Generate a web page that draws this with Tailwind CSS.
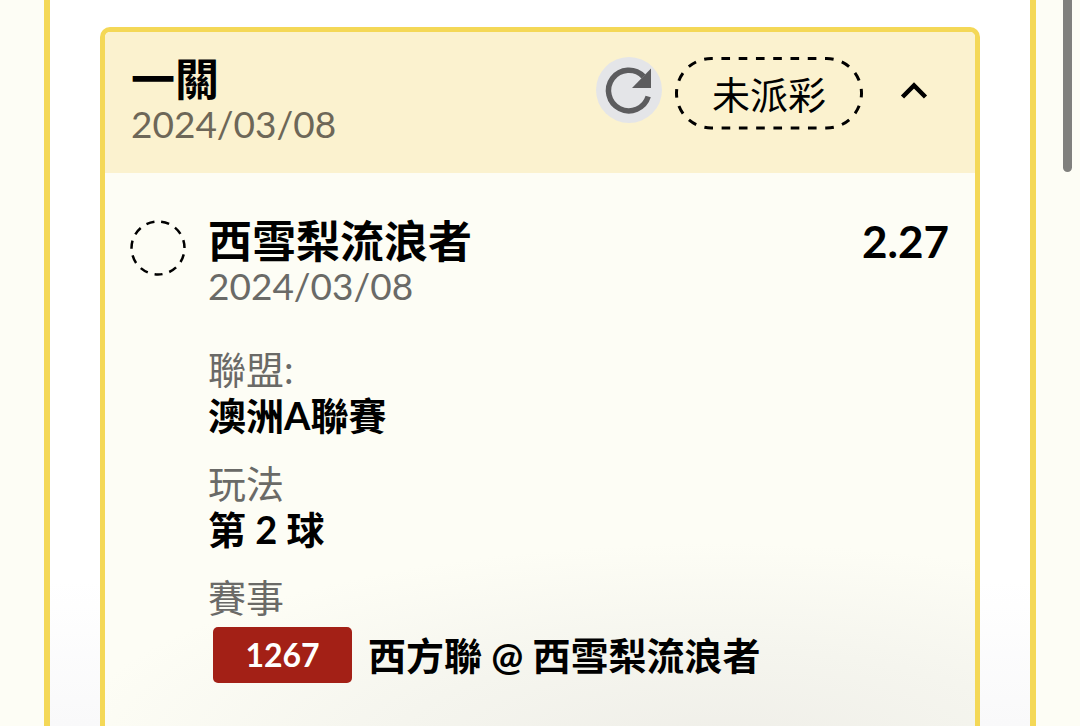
<!DOCTYPE html>
<html lang="zh-Hant">
<head>
<meta charset="utf-8">
<meta name="viewport" content="width=device-width, initial-scale=1">
<title>一關</title>
<script src="https://cdn.jsdelivr.net/npm/@tailwindcss/browser@4"></script>
</head>
<body class="relative min-h-screen overflow-hidden bg-[#fdfdf5] font-['Lato','Noto_Sans_CJK_TC',sans-serif] text-black">
<main class="mx-11 flex min-h-screen border-x-6 border-[#f4d857] bg-linear-to-b from-white from-80% to-[#f9f9fa] px-[50px] pt-[27px]">
  <article class="flex flex-1 flex-col overflow-hidden rounded-t-[10px] border-x-5 border-t-5 border-[#f4d857] bg-[#fdfdf5]">
    <header class="flex h-[141px] items-start bg-[#fbf2cf] pt-[25px] pr-[47px] pl-[26px]">
      <div class="flex-1">
        <h1 class="text-[44px] leading-[44px] font-bold">一關</h1>
        <time class="block text-[37px] leading-[46px] text-[#6d6758]">2024/03/08</time>
      </div>
      <button type="button" aria-label="重新整理" class="size-[66px] rounded-full bg-[#e4e5e8]">
        <svg viewBox="0 0 66 66" class="size-full" fill="none"><path d="M52.200 39.500A20.300 20.300 0 1 1 47.500 19.500" stroke="#5c5c5e" stroke-width="5.500"/><path d="M55 11.500v19.500H36z" fill="#5c5c5e"/></svg>
      </button>
      <div class="relative ml-3 flex h-[74px] w-[190px] items-center justify-center text-[38px]">
        <svg viewBox="0 0 190 74" class="absolute inset-0 size-full" fill="none"><rect x="2.500" y="1.500" width="185" height="69.500" rx="34.750" pathLength="442" stroke="#000" stroke-width="3" stroke-dasharray="8.500 8.500" stroke-dashoffset="7"/></svg>
        <span>未派彩</span>
      </div>
      <button type="button" aria-label="收合" class="ml-9 flex h-[68px] w-7 items-center justify-center">
        <svg viewBox="0 0 28 18" class="h-[18px] w-7" fill="none"><path d="M2.500 15 14 3.500l11.500 11.500" stroke="#000" stroke-width="4.500"/></svg>
      </button>
    </header>
    <section class="flex flex-1 items-start bg-[radial-gradient(ellipse_75%_38%_at_70%_105%,#efeee8,#f5f5ee_50%,#fdfdf5)] pt-[46px] pr-[26px] pl-6">
      <svg viewBox="0 0 58 58" class="size-[58px]" fill="none"><circle cx="29" cy="29" r="26.500" stroke="#000" stroke-width="2.500" stroke-dasharray="8.200 6.900 8.200 6.900 8.200 6.900 8.200 6.900 8.200 6.900 8.200 6.900 8.200 6.900 8.200 6.900 8.200 6.900 8.200 6.900 8.200 20" stroke-dashoffset="-6.500"/></svg>
      <div class="ml-[21px] flex-1">
        <div class="flex justify-between text-[44px] leading-[44px]">
          <h2 class="font-bold">西雪梨流浪者</h2>
          <span class="font-bold">2.27</span>
        </div>
        <time class="block text-[37px] leading-[46px] text-[#6a6a67]">2024/03/08</time>
        <dl class="mt-[37px] text-[38px] leading-[46px]">
          <dt class="text-[#6a6a67]">聯盟:</dt>
          <dd class="font-bold">澳洲A聯賽</dd>
          <dt class="mt-[22px] text-[#6a6a67]">玩法</dt>
          <dd class="font-bold">第 2 球</dd>
          <dt class="mt-[22px] text-[#6a6a67]">賽事</dt>
          <dd class="mt-[7px] flex items-center font-bold"><span class="mr-4 ml-[5px] flex h-14 w-[139px] items-center justify-center rounded-[5px] bg-[#a32016] text-[32px] text-white">1267</span>西方聯 @ 西雪梨流浪者</dd>
        </dl>
      </div>
    </section>
  </article>
</main>
<div class="absolute top-0 right-2 h-[172px] w-[9px] rounded-b-full bg-[#80807d]"></div>
</body>
</html>
